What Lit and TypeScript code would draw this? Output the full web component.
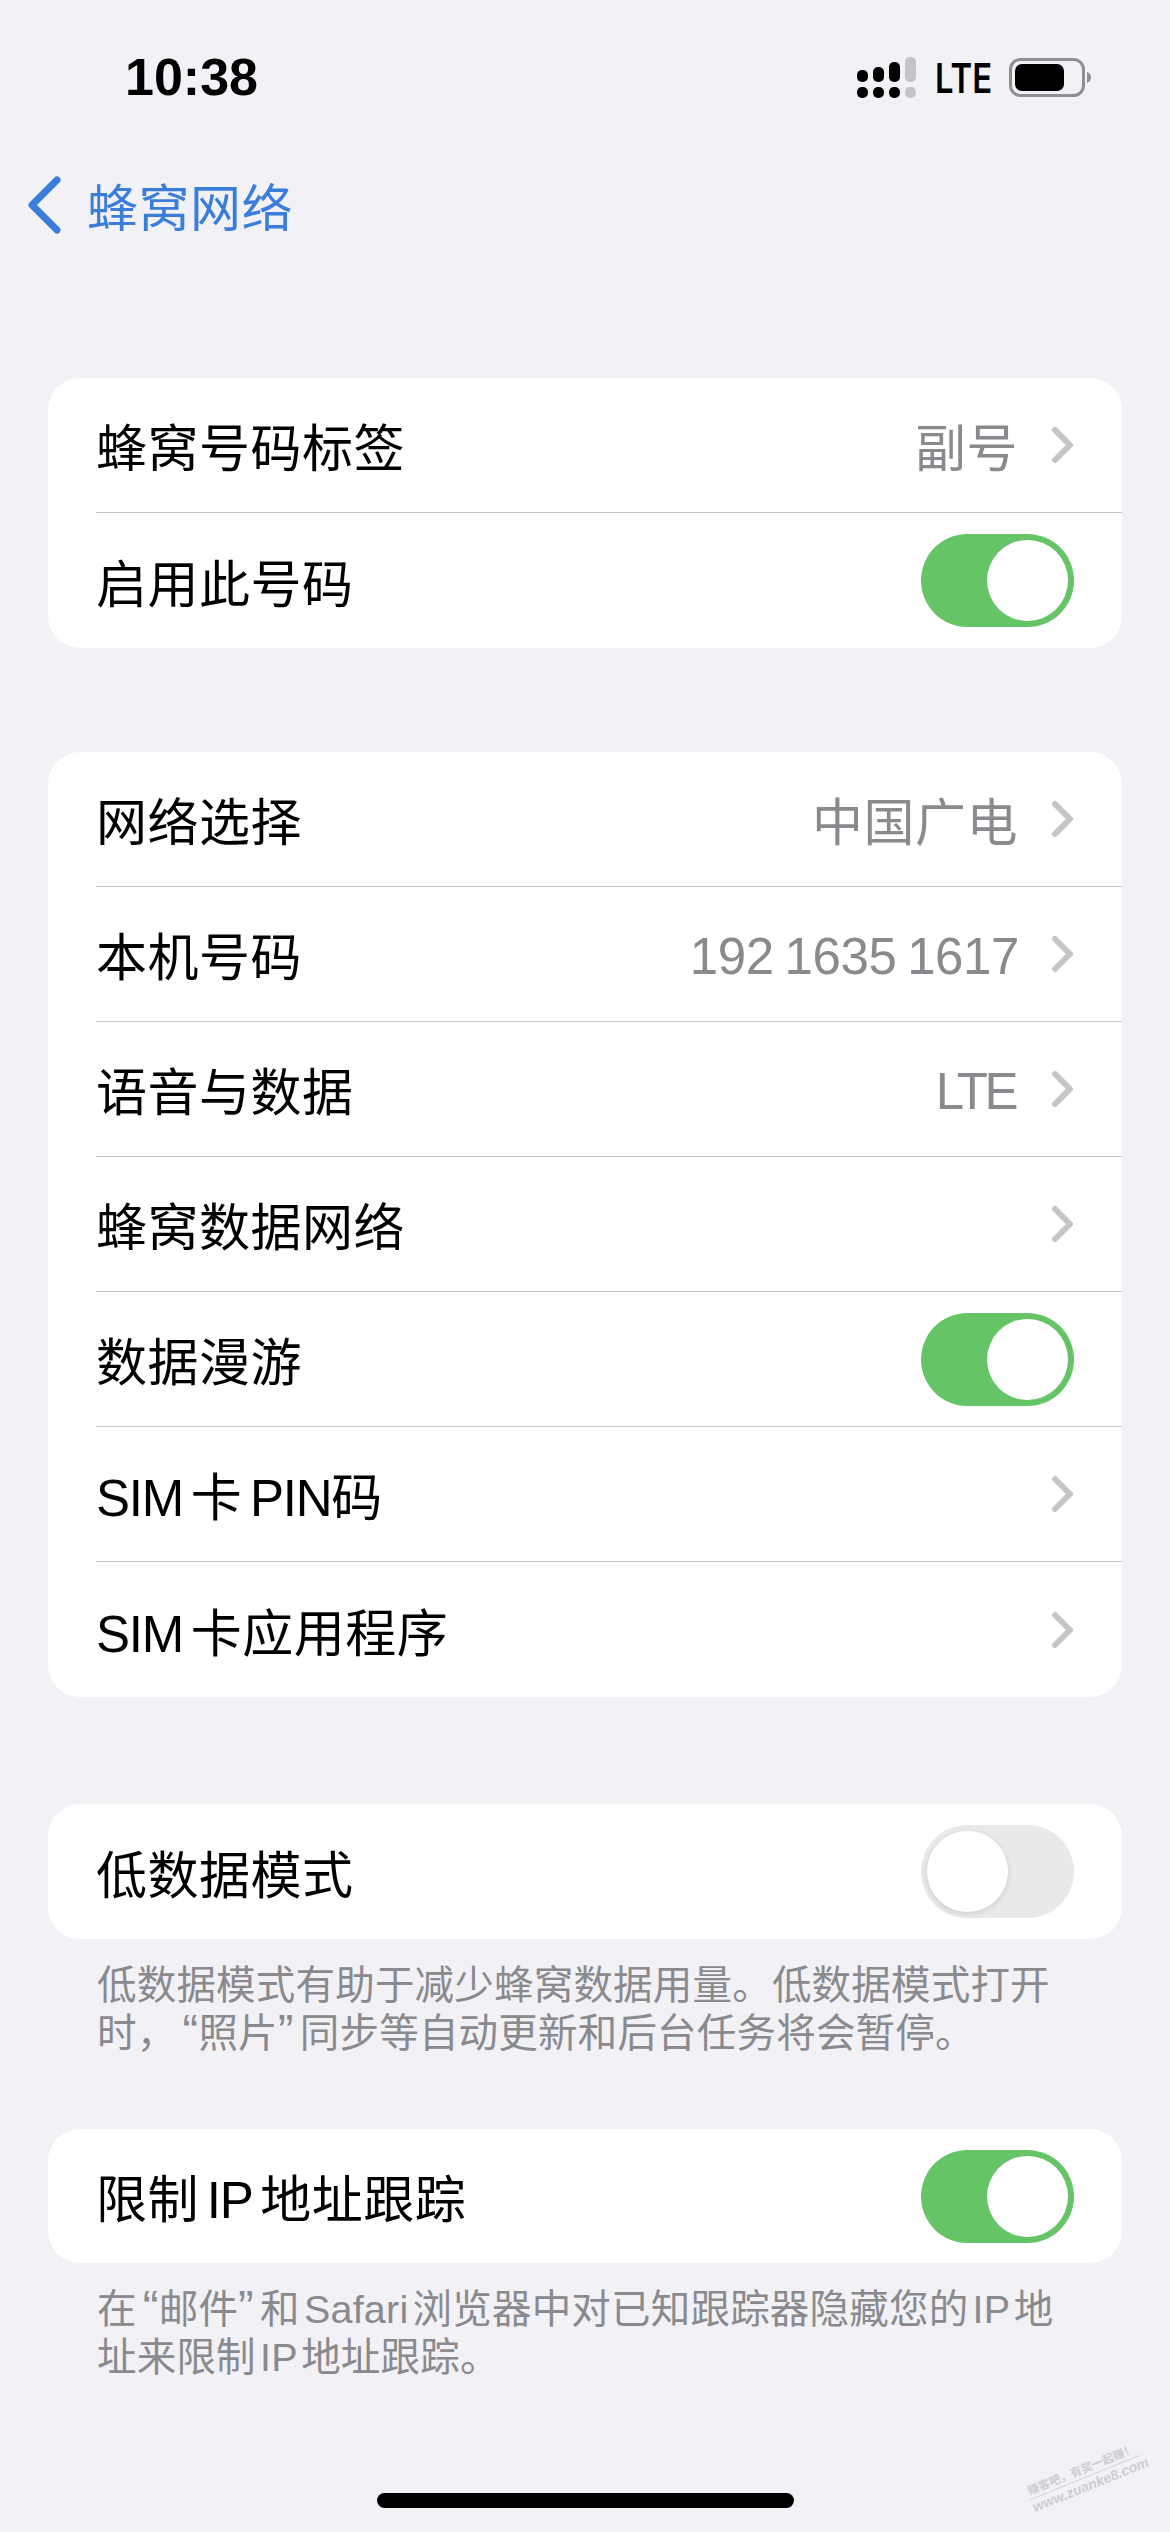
import { LitElement, html, css, svg } from "lit";
import { customElement } from "lit/decorators.js";

const chevron = html`<svg class="chev" width="24" height="38" viewBox="0 0 24 38"><path d="M4 4 L19 19 L4 34" fill="none" stroke="#c5c5c7" stroke-width="6" stroke-linecap="round" stroke-linejoin="round"/></svg>`;

type Row = { label: string; value?: string; kind?: string; chev?: boolean; sw?: "on" | "off" };

const groups: { rows: Row[]; foot?: string[]; cls: string }[] = [
  {
    cls: "g1",
    rows: [
      { label: "蜂窝号码标签", value: "副号", chev: true },
      { label: "启用此号码", sw: "on" },
    ],
  },
  {
    cls: "g2",
    rows: [
      { label: "网络选择", value: "中国广电", chev: true },
      { label: "本机号码", value: "192 1635 1617", kind: "num", chev: true },
      { label: "语音与数据", value: "LTE", kind: "num tight", chev: true },
      { label: "蜂窝数据网络", chev: true },
      { label: "数据漫游", sw: "on" },
      { label: "SIM 卡 PIN码", chev: true },
      { label: "SIM 卡应用程序", chev: true },
    ],
  },
  {
    cls: "g3",
    rows: [{ label: "低数据模式", sw: "off" }],
    foot: ["低数据模式有助于减少蜂窝数据用量。低数据模式打开", "时，“照片”同步等自动更新和后台任务将会暂停。"],
  },
  {
    cls: "g4",
    rows: [{ label: "限制 IP 地址跟踪", sw: "on" }],
    foot: ["在“邮件”和 Safari 浏览器中对已知跟踪器隐藏您的 IP 地", "址来限制 IP 地址跟踪。"],
  },
];

function runs(text: string) {
  return text.split(/([“”]|[A-Za-z]+)/).map((part) => {
    if (part === "“") return html`<span class="q open">${part}</span>`;
    if (part === "”") return html`<span class="q close">${part}</span>`;
    if (/^[A-Za-z]+$/.test(part)) return html`<span class="lat">${part}</span>`;
    return part;
  });
}

@customElement("app-root")
export class AppRoot extends LitElement {
  static styles = css`
    :host {
      display: block;
      width: 1170px;
      height: 2532px;
      background: #f1f1f6;
      font-family: "Liberation Sans", "Noto Sans CJK SC", sans-serif;
      color: #000;
      position: relative;
      overflow: hidden;
    }
    .status {
      height: 150px;
      box-sizing: border-box;
      padding: 0 79px 0 125px;
      display: flex;
      justify-content: space-between;
      align-items: flex-start;
    }
    .time {
      font-weight: 700;
      font-size: 52px;
      line-height: 60px;
      margin-top: 47px;
    }
    .icons {
      margin-top: 57px;
      display: flex;
      align-items: flex-start;
    }
    .icons svg { display: block; }
    .lte {
      display: inline-block;
      margin: 1px -1px 0 19px;
      font: 600 41px/40px "Inter", sans-serif;
      transform: scaleX(0.8);
      transform-origin: left center;
      width: 57px;
      white-space: nowrap;
    }
    .batt { margin-left: 18px; }
    .nav {
      height: 116px;
      display: flex;
      align-items: center;
      padding: 0 0 6px 26px;
      gap: 25px;
      color: #3b7ddb;
      font-size: 51px;
      letter-spacing: 0.5px;
      box-sizing: border-box;
    }
    .card {
      margin: 0 48px;
      background: #fff;
      border-radius: 32px;
      overflow: hidden;
    }
    .g1 { margin-top: 112px; }
    .g2 { margin-top: 104px; }
    .g3 { margin-top: 107px; }
    .g4 { margin-top: 72px; }
    .row {
      height: 135px;
      box-sizing: border-box;
      margin-left: 48px;
      padding-right: 48px;
      display: flex;
      align-items: center;
      font-size: 51px;
      border-bottom: 1px solid #c6c6c8;
    }
    .g4 .row { height: 134px; }
    .row:last-child { border-bottom: none; }
    .label {
      flex: 1;
      white-space: nowrap;
      letter-spacing: 0.5px;
      word-spacing: -7px;
    }
    .label .lat { letter-spacing: -1.2px; }
    .value {
      color: #8a8a8e;
      margin-right: 33px;
      white-space: nowrap;
      letter-spacing: 0.5px;
      word-spacing: -7px;
    }
    .value.num {
      letter-spacing: -0.4px;
      word-spacing: -3px;
      margin-right: 32px;
      padding-top: 4px;
    }
    .value.tight { letter-spacing: -3.5px; margin-right: 36px; }
    .chev { display: block; margin-right: -1px; }
    .sw {
      width: 153px;
      height: 93px;
      border-radius: 47px;
      box-sizing: border-box;
      padding: 6px;
      display: flex;
    }
    .sw.on { background: #65c466; justify-content: flex-end; }
    .sw.off { background: #e9e9ea; justify-content: flex-start; }
    .knob {
      width: 81px;
      height: 81px;
      border-radius: 50%;
      background: #fff;
    }
    .sw.off .knob { box-shadow: 0 2px 6px rgba(0, 0, 0, 0.12); }
    .foot {
      margin: 22px 48px 0 97px;
      font-size: 39.5px;
      line-height: 48px;
      letter-spacing: 0.2px;
      word-spacing: -7px;
      color: #8a8a8e;
      white-space: nowrap;
    }
    .q {
      display: inline-block;
      width: 22px;
      font-size: 47px;
      line-height: 0;
    }
    .q.open { text-align: right; }
    .q.close { text-align: left; }
    .home {
      position: absolute;
      left: 377px;
      top: 2493px;
      width: 417px;
      height: 15px;
      border-radius: 8px;
      background: #000;
    }
    .mark {
      position: absolute;
      left: 1026px;
      top: 2462px;
      width: 118px;
      color: #cdcdd2;
      transform: rotate(-22deg);
      white-space: nowrap;
      text-align: center;
    }
    .mark-cn {
      font-size: 11.5px;
      line-height: 15px;
      font-weight: 700;
      border-bottom: 1px solid #d6d6da;
    }
    .mark-en {
      font-size: 14px;
      line-height: 17px;
      font-style: italic;
      font-weight: 700;
    }
  `;

  private signal() {
    const cols = [
      { x: 0, top: 70, c: "#000" },
      { x: 16, top: 67, c: "#000" },
      { x: 32, top: 62, c: "#000" },
      { x: 48, top: 57, c: "#c4c4c6" },
    ];
    return cols.map(
      (k) => svg`<rect x=${k.x} y=${k.top - 57} width="11" height=${82 - k.top} rx="5" fill=${k.c}/>
        <rect x=${k.x} y="30" width="11" height="11" rx="5" fill=${k.c}/>`
    );
  }

  render() {
    return html`
      <div class="status">
        <div class="time">10:38</div>
        <div class="icons">
          <svg width="59" height="41" viewBox="0 0 59 41">${this.signal()}</svg>
          <span class="lte">LTE</span>
          <svg class="batt" width="82" height="40" viewBox="0 0 82 40">
            <rect x="1.5" y="2.5" width="73" height="36" rx="10" fill="none" stroke="#8e8e93" stroke-width="3"/>
            <rect x="6" y="7" width="49" height="27" rx="7" fill="#000"/>
            <path d="M78 15 C81 16 82 18 82 20.5 C82 23 81 25 78 26 Z" fill="#8e8e93"/>
          </svg>
        </div>
      </div>
      <div class="nav">
        <svg width="36" height="60" viewBox="0 0 36 60"><path d="M31 5 L6 30 L31 55" fill="none" stroke="#3b7ddb" stroke-width="7" stroke-linecap="round" stroke-linejoin="round"/></svg>
        <span>蜂窝网络</span>
      </div>
      ${groups.map(
        (g) => html`
          <div class="card ${g.cls}">
            ${g.rows.map(
              (r) => html`<div class="row">
                <span class="label">${runs(r.label)}</span>
                ${r.value ? html`<span class="value ${r.kind ?? ""}">${r.value}</span>` : ""}
                ${r.chev ? chevron : ""}
                ${r.sw ? html`<div class="sw ${r.sw}"><div class="knob"></div></div>` : ""}
              </div>`
            )}
          </div>
          ${g.foot ? html`<div class="foot">${g.foot.map((l) => html`<div>${runs(l)}</div>`)}</div>` : ""}
        `
      )}
      <div class="home"></div>
      <div class="mark">
        <div class="mark-cn">赚客吧，有奖一起赚！</div>
        <div class="mark-en">www.zuanke8.com</div>
      </div>
    `;
  }
}
